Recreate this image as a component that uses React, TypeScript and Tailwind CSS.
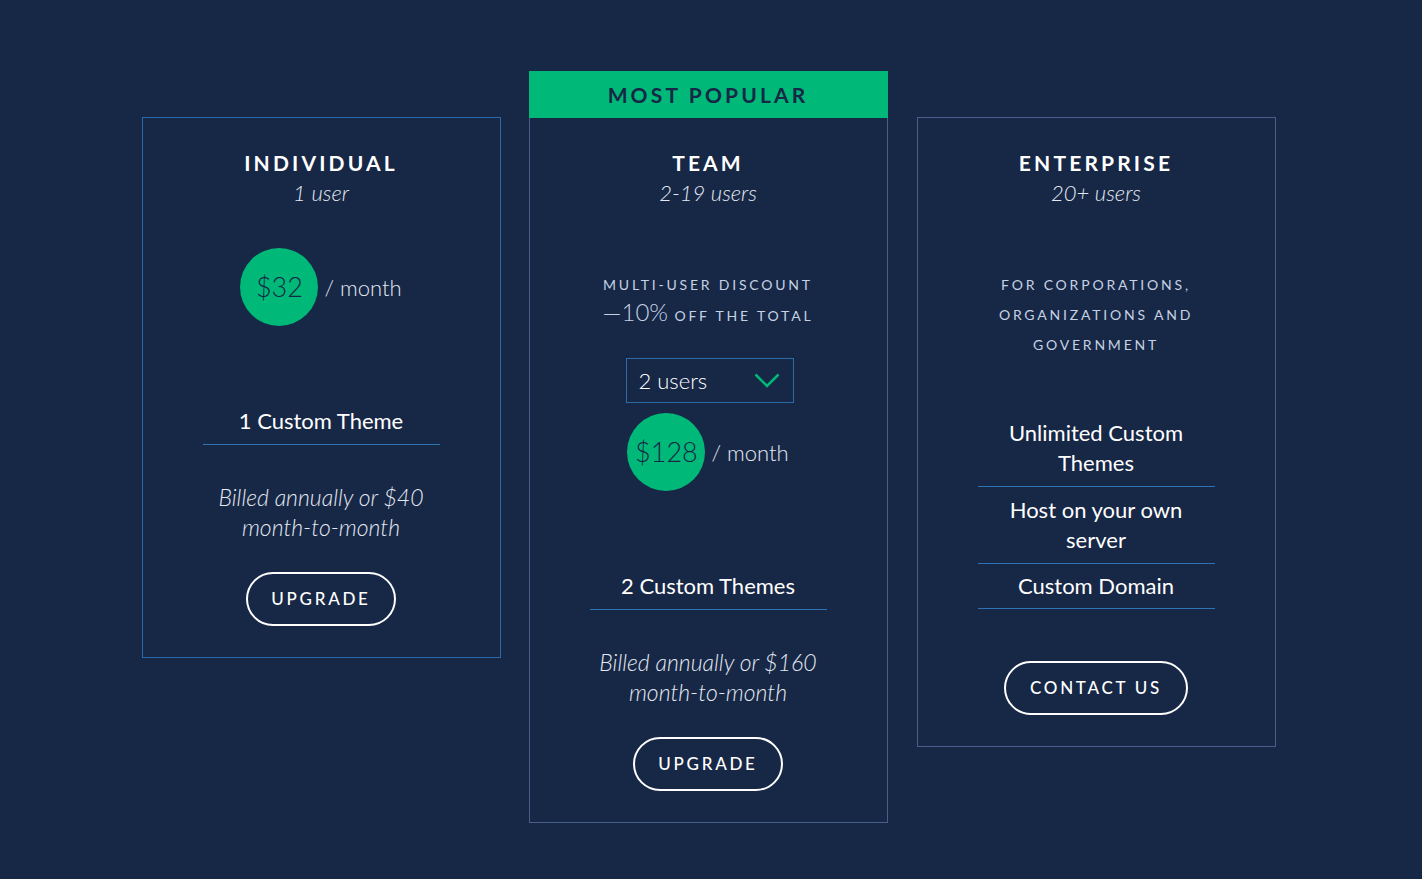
const font = { fontFamily: "Lato, 'Open Sans', sans-serif" };

const Button = ({ label, w }: { label: string; w: string }) => (
  <button
    className={`${w} h-[54px] rounded-full border-2 border-white text-[17px] tracking-[0.16em] text-white font-medium`}
  >
    {label}
  </button>
);

const Price = ({ amount }: { amount: string }) => (
  <div className="flex items-center justify-center gap-[6px]">
    <div className="flex h-[78px] w-[78px] items-center justify-center rounded-full bg-[#00b877] text-[27px] font-light text-[#172746]">
      {amount}
    </div>
    <span className="text-[22px] font-light text-[#e3e9f2]">/ month</span>
  </div>
);

const Heading = ({ title, sub }: { title: string; sub: string }) => (
  <>
    <h2 className="h-[24px] text-[21px] leading-[24px] font-bold tracking-[0.15em] text-white">
      {title}
    </h2>
    <p className="mt-[3px] text-[22px] leading-[30px] font-light italic text-[#e3e9f2]">{sub}</p>
  </>
);

const Billed = ({ amount }: { amount: string }) => (
  <p className="mt-[37px] text-[23px] leading-[30px] font-light italic text-[#e3e9f2]">
    Billed annually or {amount}
    <br />
    month-to-month
  </p>
);

export default function App() {
  return (
    <div style={font} className="min-h-[879px] w-full bg-[#172746] text-center">
      <div className="flex items-start justify-center gap-[28px] pt-[71px] pr-[5px]">
        {/* Individual */}
        <div className="mt-[46px] flex w-[359px] flex-col items-center border border-[#2a6aac] pt-[33px] pb-[31px]">
          <Heading title="INDIVIDUAL" sub="1 user" />
          <div className="mt-[40px]">
            <Price amount="$32" />
          </div>
          <div className="mt-[80px] w-[237px] border-b border-[#2e74b4] pb-[8px] text-[22px] leading-[30px] text-white">
            1 Custom Theme
          </div>
          <Billed amount="$40" />
          <div className="mt-[30px]">
            <Button label="UPGRADE" w="w-[150px]" />
          </div>
        </div>

        {/* Team */}
        <div className="flex w-[359px] flex-col">
          <div className="flex h-[47px] items-center justify-center bg-[#00b877] text-[21px] font-bold tracking-[0.15em] text-[#172746]">
            MOST POPULAR
          </div>
          <div className="flex flex-col items-center border border-t-0 border-[#475f8a] pt-[33px] pb-[31px]">
            <Heading title="TEAM" sub="2-19 users" />
            <p className="mt-[62px] text-[14px] leading-[30px] tracking-[0.2em] text-[#c5d2e4]">
              MULTI-USER DISCOUNT
            </p>
            <p className="h-[29px] text-[14px] leading-[29px] tracking-[0.2em] text-[#c5d2e4]">
              <span className="text-[24px] leading-none font-light tracking-normal">—10%</span> OFF THE TOTAL
            </p>
            <div className="mt-[29px] ml-[3px] flex h-[45px] w-[168px] items-center justify-between border border-[#2d6ca6] pr-[13px] pl-[12px]">
              <span className="text-[22px] font-light text-white">2 users</span>
              <svg width="26" height="15" viewBox="0 0 26 15" fill="none">
                <polyline points="1.5,1.5 13,13 24.5,1.5" stroke="#00b877" strokeWidth="2.6" />
              </svg>
            </div>
            <div className="mt-[10px]">
              <Price amount="$128" />
            </div>
            <div className="mt-[80px] w-[237px] border-b border-[#2e74b4] pb-[8px] text-[22px] leading-[30px] text-white">
              2 Custom Themes
            </div>
            <Billed amount="$160" />
            <div className="mt-[30px]">
              <Button label="UPGRADE" w="w-[150px]" />
            </div>
          </div>
        </div>

        {/* Enterprise */}
        <div className="mt-[46px] ml-[1px] flex w-[359px] flex-col items-center border border-[#475f8a] pt-[33px] pb-[31px]">
          <Heading title="ENTERPRISE" sub="20+ users" />
          <p className="mt-[62px] text-[14px] leading-[30px] tracking-[0.2em] text-[#c5d2e4]">
            FOR CORPORATIONS,
            <br />
            ORGANIZATIONS AND
            <br />
            GOVERNMENT
          </p>
          <ul className="mt-[58px] w-[237px] text-[22px] leading-[30px] text-white">
            <li className="border-b border-[#2e74b4] pb-[8px]">
              Unlimited Custom
              <br />
              Themes
            </li>
            <li className="border-b border-[#2e74b4] py-[8px]">
              Host on your own
              <br />
              server
            </li>
            <li className="border-b border-[#2e74b4] py-[7px]">Custom Domain</li>
          </ul>
          <div className="mt-[52px]">
            <Button label="CONTACT US" w="w-[184px]" />
          </div>
        </div>
      </div>
    </div>
  );
}
